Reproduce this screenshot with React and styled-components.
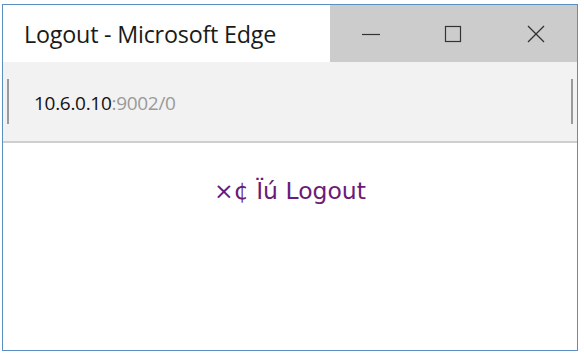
import styled, { createGlobalStyle } from "styled-components";

const GlobalStyle = createGlobalStyle`
  html, body {
    margin: 0;
    padding: 0;
    background: #ffffff;
  }
`;

const Page = styled.div`
  width: 584px;
  height: 355px;
  padding: 4px 0 0 2px;
  box-sizing: border-box;
  background: #ffffff;
`;

const Window = styled.div`
  width: 576px;
  height: 347px;
  box-sizing: border-box;
  border: 1px solid #5b8fc4;
  display: flex;
  flex-direction: column;
  background: #ffffff;
`;

const TitleBar = styled.div`
  height: 57px;
  display: flex;
  flex-shrink: 0;
`;

const Title = styled.div`
  width: 327px;
  display: flex;
  align-items: center;
  padding-left: 21px;
  box-sizing: border-box;
  font-family: "Open Sans", "Noto Sans", sans-serif;
  font-size: 23.3px;
  letter-spacing: -0.2px;
  color: #1a1a1a;
  background: #ffffff;
`;

const Controls = styled.div`
  flex: 1;
  display: flex;
  background: #cccccc;
`;

const ControlButton = styled.div`
  flex: 1;
  display: flex;
  align-items: center;
  justify-content: center;
`;

const AddressBar = styled.div`
  height: 79px;
  flex-shrink: 0;
  display: flex;
  align-items: center;
  padding: 0 4px;
  background: #f2f2f2;
  border-bottom: 2px solid #cfcfcf;
`;

const Edge = styled.div`
  width: 2px;
  height: 45px;
  background: #9a9a9a;
`;

const Url = styled.div`
  flex: 1;
  padding-left: 25px;
  padding-top: 2px;
  font-family: "Open Sans", "Noto Sans", sans-serif;
  font-size: 19px;
  letter-spacing: -0.3px;
  color: #111111;
`;

const Port = styled.span`
  color: #9a9a9a;
`;

const Content = styled.div`
  flex: 1;
  display: flex;
  justify-content: center;
  padding-top: 34px;
`;

const Message = styled.div`
  font-family: "DejaVu Sans", sans-serif;
  font-size: 23.5px;
  color: #6a1b78;
  height: 28px;
`;

const Icon = ({ children }) => (
  <svg width="20" height="20" viewBox="0 0 20 20" fill="none" stroke="#333" strokeWidth="1.2">
    {children}
  </svg>
);

export default function App() {
  return (
    <>
      <GlobalStyle />
      <Page>
        <Window>
          <TitleBar>
            <Title>Logout - Microsoft Edge</Title>
            <Controls>
              <ControlButton>
                <Icon>
                  <line x1="1" y1="10.5" x2="19" y2="10.5" />
                </Icon>
              </ControlButton>
              <ControlButton>
                <Icon>
                  <rect x="2.5" y="2.5" width="15" height="15" />
                </Icon>
              </ControlButton>
              <ControlButton>
                <Icon>
                  <line x1="2" y1="2" x2="18" y2="18" />
                  <line x1="18" y1="2" x2="2" y2="18" />
                </Icon>
              </ControlButton>
            </Controls>
          </TitleBar>
          <AddressBar>
            <Edge />
            <Url>
              10.6.0.10<Port>:9002/0</Port>
            </Url>
            <Edge />
          </AddressBar>
          <Content>
            <Message>×¢ Ïú Logout</Message>
          </Content>
        </Window>
      </Page>
    </>
  );
}
